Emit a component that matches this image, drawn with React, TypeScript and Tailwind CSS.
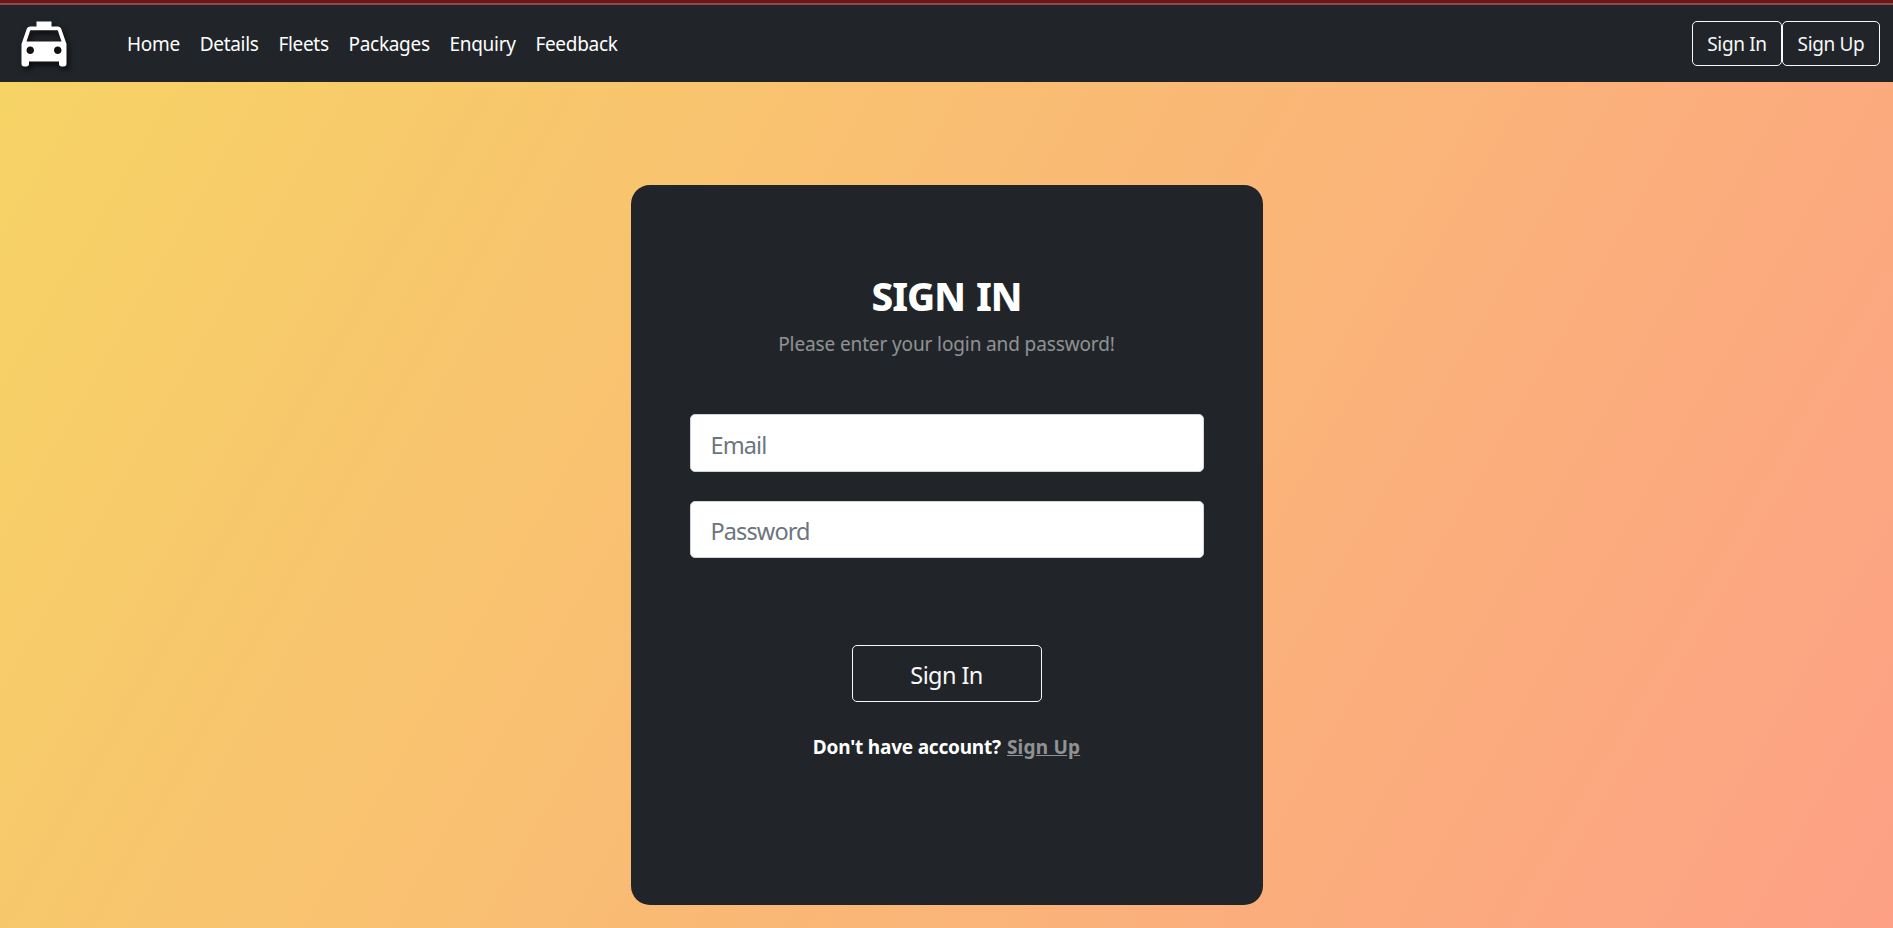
import { MdLocalTaxi } from "react-icons/md";

const links = ["Home", "Details", "Fleets", "Packages", "Enquiry", "Feedback"];

function NavBar() {
  return (
    <header className="flex h-[82px] shrink-0 flex-col bg-[#212529]">
      <div className="h-[5px] shrink-0 border-b-2 border-[#8a4a50] bg-[#6b1717]" />
      <div className="flex flex-1 items-center pr-[13px] pb-px pl-[13.5px]">
        <MdLocalTaxi className="mt-px size-[60px] text-white drop-shadow-[2px_3px_3px_rgba(0,0,0,0.8)]" />
        <nav className="ml-[53.5px] flex gap-[19.8px] pt-[2px] text-[19px] leading-[28px] tracking-[-0.3px] text-white">
          {links.map((label) => (
            <a key={label} href="#">
              {label}
            </a>
          ))}
        </nav>
        <div className="ml-auto flex text-[19px] leading-[28px] tracking-[-0.35px] text-[#f8f9fa]">
          <button className="h-[45px] w-[90px] rounded-[5px] border border-[#f8f9fa] pt-[2px]">Sign In</button>
          <button className="h-[45px] w-[98px] rounded-[5px] border border-[#f8f9fa] pt-[2px]">Sign Up</button>
        </div>
      </div>
    </header>
  );
}

function SignInCard() {
  return (
    <section className="mt-[103px] flex h-[720px] w-[632px] flex-col items-center rounded-[19px] bg-[#212529] px-[59px] pt-[88px] text-white">
      <h2 className="text-[38.5px] leading-[46px] font-extrabold tracking-[-1px] [word-spacing:2px]">SIGN IN</h2>
      <p className="mt-[11px] text-[19px] leading-[29px] tracking-[-0.12px] text-white/50">
        Please enter your login and password!
      </p>
      <input
        type="email"
        placeholder="Email"
        className="mt-[55px] h-[58px] w-full rounded-[5px] border border-[#ced4da] bg-white px-[20px] pt-[3px] text-[23.5px] tracking-[-0.9px] placeholder:text-[#6c757d]"
      />
      <input
        type="password"
        placeholder="Password"
        className="mt-[29px] h-[57px] w-full rounded-[5px] border border-[#ced4da] bg-white px-[20px] pt-[3px] text-[23.5px] tracking-[-0.9px] placeholder:text-[#6c757d]"
      />
      <button className="mt-[87px] h-[57px] w-[190px] rounded-[5px] border border-[#f8f9fa] pt-[4px] text-[23.5px] tracking-[-0.6px] text-[#f8f9fa]">
        Sign In
      </button>
      <p className="mt-[31px] flex gap-[6px] text-[19px] leading-[29px] font-bold tracking-[-0.2px]">
        <span>Don't have account?</span>
        <a href="#" className="tracking-[0.2px] text-white/50 underline">
          Sign Up
        </a>
      </p>
    </section>
  );
}

export default function App() {
  return (
    <div className="flex h-[928px] w-full flex-col overflow-hidden font-['Noto_Sans',sans-serif]">
      <NavBar />
      <main className="flex flex-1 flex-col items-center bg-[linear-gradient(120deg,#f6d365_0%,#fda085_100%)]">
        <SignInCard />
      </main>
    </div>
  );
}
